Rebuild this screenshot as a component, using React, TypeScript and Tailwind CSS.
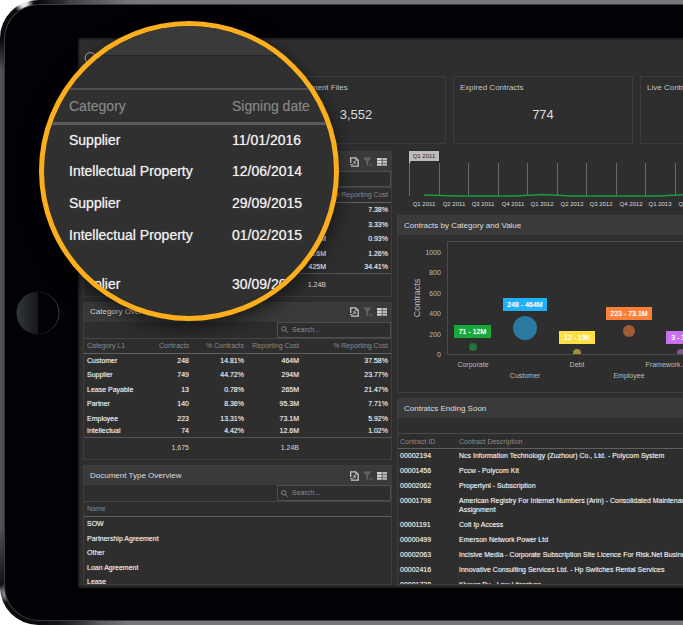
import React from "react";

type Row = string[];

const overviewColumns = [
  "Category L1",
  "Contracts",
  "% Contracts",
  "Reporting Cost",
  "% Reporting Cost",
];

const supplierRows: Row[] = [
  ["", "", "", "", "7.38%"],
  ["", "", "", "", "3.33%"],
  ["", "", "", "11.5M", "0.93%"],
  ["", "", "", "15.6M", "1.26%"],
  ["", "", "", "425M", "34.41%"],
];

const categoryRows: Row[] = [
  ["Customer", "248", "14.81%", "464M", "37.58%"],
  ["Supplier", "749", "44.72%", "294M", "23.77%"],
  ["Lease Payable", "13", "0.78%", "265M", "21.47%"],
  ["Partner", "140", "8.36%", "95.3M", "7.71%"],
  ["Employee", "223", "13.31%", "73.1M", "5.92%"],
  ["Intellectual", "74", "4.42%", "12.6M", "1.02%"],
];

const documentTypes = [
  "SOW",
  "Partnership Agreement",
  "Other",
  "Loan Agreement",
  "Lease",
];

const endingSoon = [
  {
    id: "00002194",
    text: "Ncs Information Technology (Zuzhour) Co., Ltd. - Polycom System",
  },
  { id: "00001456", text: "Pccw - Polycom Kit" },
  { id: "00002062", text: "Propertynl - Subscription" },
  {
    id: "00001798",
    text: "American Registry For Internet Numbers (Arin) - Consolidated Maintenance\nAssignment",
  },
  { id: "00001191", text: "Colt Ip Access" },
  { id: "00000499", text: "Emerson Network Power Ltd" },
  {
    id: "00002063",
    text: "Incisive Media - Corporate Subscription Site Licence For Risk.Net Business",
  },
  {
    id: "00002416",
    text: "Innovative Consulting Services Ltd. - Hp Switches Rental Services",
  },
  { id: "00001738", text: "Kluwer Bv - Law Literature" },
];

const quarters = [
  "Q1 2011",
  "Q2 2011",
  "Q3 2011",
  "Q4 2011",
  "Q1 2012",
  "Q2 2012",
  "Q3 2012",
  "Q4 2012",
  "Q1 2013",
  "Q2 2013",
];

const bubbles = [
  { name: "Corporate", x: 75, y: 112, r: 4, fill: "#26733b", tag: "71 - 12M", tagX: 56, tagY: 90, tagW: 37, tagFill: "#17a93c" },
  { name: "Customer", x: 127, y: 93, r: 12, fill: "#2a7a9f", tag: "248 - 464M", tagX: 105, tagY: 63, tagW: 44, tagFill: "#1fb0f8" },
  { name: "Debt", x: 179, y: 118, r: 4, fill: "#9c9038", tag: "12 - 19K", tagX: 161, tagY: 96, tagW: 36, tagFill: "#fde045" },
  { name: "Employee", x: 231, y: 96, r: 6, fill: "#a15d36", tag: "223 - 73.1M", tagX: 208, tagY: 72, tagW: 46, tagFill: "#fd8036" },
  { name: "Framework Agreement", x: 283, y: 118, r: 4, fill: "#855399", tag: "3 - 3.1M", tagX: 268, tagY: 96, tagW: 36, tagFill: "#c970f0" },
];

const magnifierRows = [
  ["Supplier", "11/01/2016"],
  ["Intellectual Property", "12/06/2014"],
  ["Supplier", "29/09/2015"],
  ["Intellectual Property", "01/02/2015"],
  ["Supplier", "30/09/2015"],
];

function ExportIcon() {
  return (
    <svg width="9" height="10" viewBox="0 0 9 10" fill="none">
      <path d="M.7 6V.8h5l2.500 2.400v6H1" stroke="#c8c8c8" strokeWidth="1.300" />
      <path d="M5.500 1v2.500H8" stroke="#a8a8a8" strokeWidth="0.900" />
      <path d="M0 7.600h2.400L5 5M5.200 7V4.800H3.200" stroke="#b4b4b4" />
    </svg>
  );
}

function ClearFilterIcon() {
  return (
    <svg width="10" height="10" viewBox="0 0 10 10">
      <path d="M0 .5h8.400L5.200 4.400v4.800L3.400 8V4.400z" fill="#616161" />
      <path d="M6.400 6.200l3 3M9.400 6.200l-3 3" stroke="#616161" strokeWidth="0.900" />
    </svg>
  );
}

function ColumnsIcon() {
  return (
    <svg width="10" height="8" viewBox="0 0 10 8" fill="#cfcfcf">
      <path d="M0 0h4.700v2.200H0zM0 2.800h4.700v2.200H0zM0 5.600h4.700v2.200H0z" />
      <path d="M5.400 0H10v2.200H5.400zM5.400 2.800H10v2.200H5.400zM5.400 5.600H10v2.200H5.400z" fillOpacity="0.850" />
    </svg>
  );
}

function PanelHeader({ title, tools }: { title: string; tools?: boolean }) {
  return (
    <div className="flex h-[19px] items-center justify-between bg-[#3a3a3a] pl-[6px] pr-1">
      <h2 className="text-[8px] leading-[10px] text-[#dedede]">{title}</h2>
      {tools && (
        <div className="flex items-center gap-1">
          <button aria-label="Export">
            <ExportIcon />
          </button>
          <button aria-label="Clear filter">
            <ClearFilterIcon />
          </button>
          <button aria-label="Columns">
            <ColumnsIcon />
          </button>
        </div>
      )}
    </div>
  );
}

function SearchRow({ name, empty }: { name: string; empty?: boolean }) {
  return (
    <div className="flex h-4 justify-end">
      <label className="flex w-[114px] items-center gap-1 border border-[#4f4f4f] pl-[3px]">
        {!empty && (
          <svg width="7" height="7" viewBox="0 0 7 7" fill="none" stroke="#8c8c8c" className="shrink-0">
            <circle cx="2.800" cy="2.800" r="2.200" strokeWidth="0.900" />
            <path d="M4.500 4.500L6.700 6.700" />
          </svg>
        )}
        <input
          aria-label={name}
          placeholder={empty ? undefined : "Search..."}
          className="w-full min-w-0 bg-transparent text-[7px] leading-[10px] text-[#e4e4e4] outline-none placeholder:text-[#8c8c8c]"
        />
      </label>
    </div>
  );
}

function OverviewPanel({
  title,
  rows,
  totals,
  wide,
}: {
  title: string;
  rows: Row[];
  totals: Row;
  wide?: boolean;
}) {
  return (
    <section className="border border-[#3d3d3d]">
      <PanelHeader title={title} tools />
      <SearchRow name={`Search ${title}`} empty={wide} />
      <table className="w-full table-fixed border-collapse text-right text-[7px] leading-[10px]">
        <colgroup>
          <col className={wide ? "w-[87px]" : "w-[60px]"} />
          <col className="w-[48px]" />
          <col className="w-[55px]" />
          <col className="w-[55px]" />
          <col />
        </colgroup>
        <thead>
          <tr className="h-[15px] border-t border-b border-t-[#454545] border-b-[#606060] text-[#8a8a8a]">
            {overviewColumns.map((column) => (
              <th
                key={column}
                className="whitespace-nowrap px-[3px] font-normal first:text-left"
              >
                {column}
              </th>
            ))}
          </tr>
        </thead>
        <tbody className="whitespace-nowrap text-[#f0f0f0] [text-shadow:0_0_1px_#999]">
          {rows.map((row, i) => (
            <tr
              key={i}
              className="odd:h-[15px] even:h-[14px] odd:last:h-[13px] even:last:h-[11px]"
            >
              {row.map((cell, j) => (
                <td key={j} className="px-[3px] first:text-left">
                  {cell}
                </td>
              ))}
            </tr>
          ))}
        </tbody>
        <tfoot>
          <tr className="h-[22px] border-t border-[#555] text-[#d8d8d8]">
            {totals.map((cell, i) => (
              <td key={i} className="px-[3px]">
                {cell}
              </td>
            ))}
          </tr>
        </tfoot>
      </table>
    </section>
  );
}

function DocumentTypePanel() {
  return (
    <section className="h-[120px] overflow-hidden border border-[#3d3d3d]">
      <PanelHeader title="Document Type Overview" tools />
      <SearchRow name="Search document types" />
      <table className="w-full border-collapse text-left text-[7px] leading-[10px]">
        <thead>
          <tr className="h-[15px] border-t border-b border-t-[#454545] border-b-[#606060] text-[#8a8a8a]">
            <th className="px-[3px] font-normal">Name</th>
          </tr>
        </thead>
        <tbody className="text-[#f0f0f0] [text-shadow:0_0_1px_#999]">
          {documentTypes.map((type) => (
            <tr key={type} className="odd:h-[15px] even:h-[14px]">
              <td className="px-[3px]">{type}</td>
            </tr>
          ))}
        </tbody>
      </table>
    </section>
  );
}

function KpiCard({ title, value }: { title: string; value: string }) {
  return (
    <div className="h-[68px] w-[180px] shrink-0 border border-[#3b3b3b] px-[6px] pt-[6px] first:w-[176px]">
      <div className="text-[8px] leading-[10px] text-[#c4c4c4]">{title}</div>
      <div className="pt-[13px] text-center text-[13px] leading-[18px] text-[#dcdcdc]">
        {value}
      </div>
    </div>
  );
}

function Timeline() {
  const step = 29.5;
  return (
    <svg width="100%" height="60" className="block" fontSize="6">
      {quarters.map((quarter, i) => (
        <g key={quarter}>
          <rect x={Math.round(12 + i * step)} y={i === 0 ? 9 : 12} width="1" height={i === 0 ? 36 : 33} fill="#6a6a6a" />
          <text x={Math.round(27 + i * step)} y="55" textAnchor="middle" fill="#d8d8d8">
            {quarter}
          </text>
        </g>
      ))}
      <path
        d="M27 44L60 45H118L146 43.500L175 45H262L300 43"
        fill="none"
        stroke="#1f9a3d"
        strokeWidth="1.400"
      />
      <path d="M12 0H42V10H14L12 13z" fill="#bdbdbd" />
      <text x="27" y="7" textAnchor="middle" fill="#262626">
        Q1 2011
      </text>
    </svg>
  );
}

function BubbleChart() {
  return (
    <svg width="100%" height="157" className="block" fontSize="7">
      <defs>
        <clipPath id="plot">
          <rect x="50" y="7" width="600" height="112" />
        </clipPath>
      </defs>
      <path d="M700 6.500H49.500V119.500H700" fill="none" stroke="#4a4a4a" />
      {[1000, 800, 600, 400, 200, 0].map((tick, i) => (
        <text key={tick} x="43" y={Math.round(20 + i * 20.4)} textAnchor="end" fill="#bcbcbc">
          {tick}
        </text>
      ))}
      <text fontSize="9" textAnchor="middle" fill="#bcbcbc" transform="translate(22 63) rotate(-90)">
        Contracts
      </text>
      {bubbles.map((b, i) => (
        <g key={b.name}>
          <circle cx={b.x} cy={b.y} r={b.r} fill={b.fill} clipPath="url(#plot)" />
          <rect x={b.tagX} y={b.tagY} width={b.tagW} height="13" fill={b.tagFill} />
          <text x={b.tagX + b.tagW / 2} y={b.tagY + 9} textAnchor="middle" fill="#fff" className="[text-shadow:0_0_1px_#fff]">
            {b.tag}
          </text>
          <text x={b.x} y={i % 2 ? 143 : 132} textAnchor="middle" fill="#bcbcbc">
            {b.name}
          </text>
        </g>
      ))}
    </svg>
  );
}

function EndingSoonPanel() {
  return (
    <section className="h-[187px] overflow-hidden border border-r-0 border-[#3d3d3d]">
      <PanelHeader title="Contratcs Ending Soon" />
      <div className="h-[15px]" />
      <table className="w-full table-fixed border-collapse whitespace-pre text-left text-[7px] leading-[9px]">
        <thead>
          <tr className="h-[15px] border-t border-b border-t-[#4a4a4a] border-b-[#606060] text-[#8a8a8a]">
            <th className="w-[59px] px-[2px] font-normal">Contract ID</th>
            <th className="px-[2px] font-normal">Contract Description</th>
          </tr>
        </thead>
        <tbody className="text-[#f0f0f0] [text-shadow:0_0_1px_#999]">
          {endingSoon.map((contract) => (
            <tr key={contract.id} className="align-top">
              <td className="px-[2px] pt-[2px] pb-1">{contract.id}</td>
              <td className="px-[2px] pt-[2px] pb-1">{contract.text}</td>
            </tr>
          ))}
        </tbody>
      </table>
    </section>
  );
}

// Round lens lying over the top left of the tablet
function Magnifier() {
  return (
    <div className="absolute left-[39px] top-[21px] size-[300px] overflow-hidden rounded-full border-[5px] border-[#fdae1c] bg-[#303030] shadow-[0_6px_20px_rgba(0,0,0,0.6)]">
      <div className="h-[30px] border-b border-[#272727] bg-[#3a3a3a]" />
      <div className="h-8" />
      <table className="w-full table-fixed border-collapse whitespace-nowrap text-left text-[14px] leading-5">
        <thead>
          <tr className="h-[34px] border-t-2 border-b-[3px] border-t-[#505050] border-b-[#595959] text-[#858585] [text-shadow:0_0_1px_#555]">
            <th className="w-[188px] pl-[25px] font-normal">Category</th>
            <th className="font-normal">Signing date</th>
          </tr>
        </thead>
        <tbody className="text-[#f2f2f2] [text-shadow:0_0_1px_#aaa]">
          {magnifierRows.map(([category, date], i) => (
            <tr key={i} className="h-8 last:h-[66px]">
              <td className="pl-[25px]">{category}</td>
              <td>{date}</td>
            </tr>
          ))}
        </tbody>
      </table>
    </div>
  );
}

function HomeButton() {
  return (
    <button aria-label="Home" className="ml-[11px] shrink-0">
      <svg width="44" height="44" viewBox="0 0 44 44" className="block">
        <defs>
          <linearGradient id="home" x1="0" x2="1" y1="0" y2="0">
            <stop offset="0" stopColor="#34363b" />
            <stop offset="1" stopColor="#14181a" />
          </linearGradient>
          <linearGradient id="ring" x1="0" x2="1" y1="0" y2="0">
            <stop offset="0.500" stopColor="#08080b" />
            <stop offset="1" stopColor="#3a3a3f" />
          </linearGradient>
        </defs>
        <circle cx="22" cy="22" r="21" fill="none" stroke="url(#ring)" />
        <path d="M22 .5a21.500 21.500 0 0 0 0 43z" fill="url(#home)" />
      </svg>
    </button>
  );
}

export default function App() {
  return (
    <main className="relative overflow-hidden bg-white font-['Liberation_Sans',Arial,sans-serif]">
      <div className="rounded-l-[38px] bg-[radial-gradient(circle_at_24px_4px,#e4e4e6_0,#e4e4e6_3px,transparent_10px),radial-gradient(circle_at_7px_calc(100%_-_32px),#c8c8ca_0,transparent_10px),radial-gradient(circle_at_12px_12px,#0c0c0f_0,#0c0c0f_30px,transparent_60px),radial-gradient(circle_at_12px_calc(100%_-_8px),#0c0c0f_0,#0c0c0f_30px,transparent_90px),linear-gradient(90deg,#55555a_0,#4a4a4e_4px,#3a3a3e_60px,#77767a_130px)] py-1 pl-1">
        <div className="flex items-center rounded-l-[35px] border-l border-t border-b border-[#3a3a3e] bg-[#020206] pt-[33px] pb-8">
          <HomeButton />
          <div className="ml-[18px] min-w-0 flex-1 overflow-hidden rounded-l-[3px] border-2 border-r-0 border-[#212121] bg-[#2e2e2e] pb-px pl-[3px]">
            <header className="flex h-9 items-center pl-px">
              <svg width="13" height="13" viewBox="0 0 13 13" fill="none" stroke="#b5b5b5">
                <circle cx="6.500" cy="6" r="5.400" />
              </svg>
            </header>
            <div className="flex gap-[7px]">
              <KpiCard title="Contracts" value="1,675" />
              <KpiCard title="Total Document Files" value="3,552" />
              <KpiCard title="Expired Contracts" value="774" />
              <KpiCard title="Live Contracts" value="901" />
            </div>
            <div className="flex gap-[5px] pt-[7px]">
              <div className="flex w-[309px] shrink-0 flex-col gap-[5px]">
                <OverviewPanel
                  title="Supplier Overview"
                  rows={supplierRows}
                  totals={["", "", "", "1.24B", ""]}
                  wide
                />
                <OverviewPanel
                  title="Category Overview"
                  rows={categoryRows}
                  totals={["", "1,675", "", "1.24B", ""]}
                />
                <DocumentTypePanel />
              </div>
              <div className="flex min-w-0 flex-1 flex-col">
                <Timeline />
                <section className="mt-1 mb-[5px] border border-r-0 border-[#3d3d3d]">
                  <PanelHeader title="Contracts by Category and Value" />
                  <BubbleChart />
                </section>
                <EndingSoonPanel />
              </div>
            </div>
          </div>
        </div>
      </div>
      <Magnifier />
    </main>
  );
}
